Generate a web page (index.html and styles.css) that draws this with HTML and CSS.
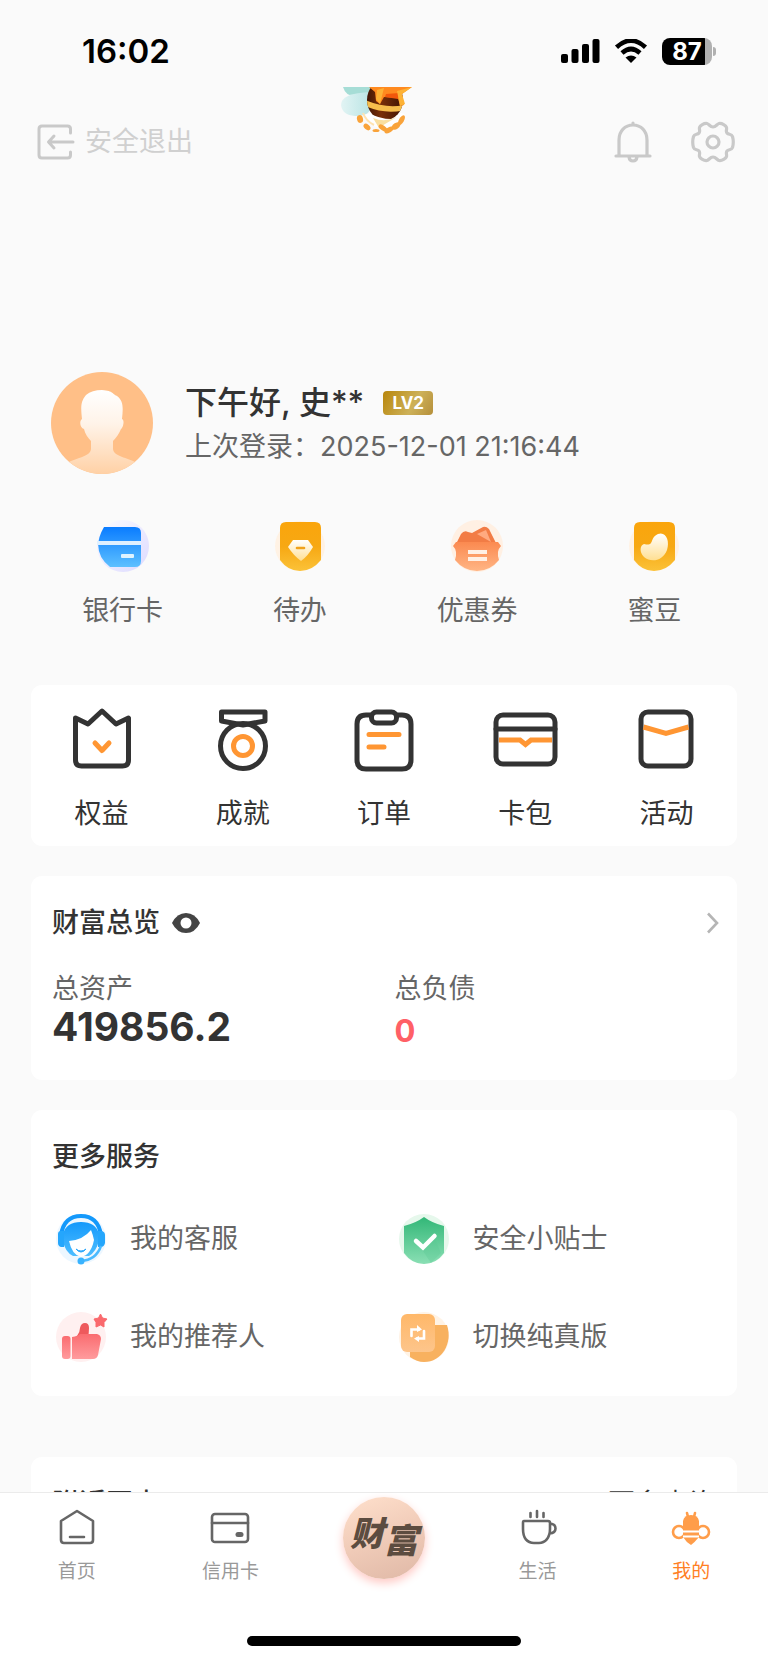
FILE: index.html
```html
<!DOCTYPE html>
<html lang="zh-CN">
  <head>
    <meta charset="UTF-8" />
    <meta name="viewport" content="width=device-width, initial-scale=1.0" />
    <title>我的</title>
    <link rel="stylesheet" href="styles.css">
  </head>
  <body>
    <div class="app">
      <div class="status-bar">
        <span class="time">16:02</span>
        <div class="status-icons">
          <svg width="39" height="26" viewBox="0 0 39 26">
            <rect x="0" y="16" width="7" height="9" rx="2" />
            <rect x="10.5" y="11" width="7" height="14" rx="2" />
            <rect x="21" y="6" width="7" height="19" rx="2" />
            <rect x="31.5" y="1" width="7" height="24" rx="2" />
          </svg>
          <svg width="34" height="24" viewBox="0 0 34 24">
            <path d="M2.5 8.2Q17-5 31.5 8.2M8 14Q17 6 26 14" fill="none" stroke="#000" stroke-width="4.6" />
            <path d="M11.5 18.6Q17 14.4 22.5 18.6L17 24Z" />
          </svg>
          <span class="battery">87</span>
        </div>
      </div>

      <main>
        <header class="top">
          <svg class="bee" width="76" height="48" viewBox="0 0 76 48">
            <defs>
              <linearGradient id="wing" x1="0" x2="1">
                <stop offset="0" stop-color="#e2f4f4" />
                <stop offset="1" stop-color="#b9e4e4" />
              </linearGradient>
              <linearGradient id="stripe" x1="0" x2="1">
                <stop offset="0" stop-color="#3a1204" />
                <stop offset=".4" stop-color="#7a2f08" />
                <stop offset="1" stop-color="#3a1204" />
              </linearGradient>
              <clipPath id="belly"><ellipse cx="46" cy="13" rx="18" ry="20" /></clipPath>
            </defs>
            <path d="M4 0H34L28 7Q8 14 4 0Z" fill="#a6ddd6" />
            <path d="M32 5Q2 6 2 18Q3 28 16 29Q30 29 31 22Z" fill="url(#wing)" />
            <path d="M25 28Q32 43 48 41Q60 38 66 27L46 22Z" fill="#fff" />
            <path d="M24 26Q27 34 35 38" fill="none" stroke="#ffe3b0" stroke-width="2" />
            <path d="M34 31Q46 36 58 30L46 37L40 41Z" fill="#f9dfa0" />
            <g clip-path="url(#belly)">
              <path d="M26-5H66V30Q46 36 26 24Z" fill="url(#stripe)" />
              <path d="M26 13Q46 22 66 18V23Q46 28 26 19Z" fill="#f6bd4c" />
            </g>
            <path d="M30 0H73L63 7L65 18L61 19L59 11L45 10L41 17L37 14L36 5Z" fill="#ff8a1f" />
            <path d="M47 7L60 6L59 12L46 10Z" fill="#f2570b" />
            <path d="M38 3L45 1L41 17L37 12ZM58 4L73 0L63 7L66 17L61 19Z" fill="#fdb235" />
            <g fill="#f9a33a">
              <ellipse cx="21" cy="32" rx="3" ry="4" transform="rotate(-15 21 32)" />
              <ellipse cx="28" cy="40" rx="4" ry="2.5" transform="rotate(40 28 40)" />
              <ellipse cx="37" cy="43.5" rx="3.5" ry="1.6" />
              <ellipse cx="44" cy="41" rx="5" ry="2.5" transform="rotate(35 44 41)" />
              <ellipse cx="50" cy="43" rx="5" ry="2.5" transform="rotate(-30 50 43)" />
              <ellipse cx="57" cy="39" rx="5" ry="3" transform="rotate(-35 57 39)" />
              <ellipse cx="62.5" cy="33" rx="2.5" ry="5.5" transform="rotate(30 62 33)" />
            </g>
          </svg>
          <button class="logout" type="button">
            <svg width="38" height="36" viewBox="0 0 38 36" fill="none" stroke="#c9c9c9" stroke-width="3" stroke-linecap="round" stroke-linejoin="round">
              <path d="M33.500 9V5Q33.500 2 30.500 2H5Q2 2 2 5V31Q2 34 5 34H30.500Q33.500 34 33.500 31V28" />
              <path d="M36 18H12M17 12L11.500 18L17 24" />
            </svg>
            安全退出
          </button>
          <div class="top-actions">
            <button type="button" aria-label="消息">
              <svg width="38" height="42" viewBox="0 0 38 42" fill="none" stroke="#c9c9c9" stroke-width="3.2" stroke-linecap="round">
                <path d="M2 35H36M5 35V19C5 10 11 4 19 4S33 10 33 19V35M19 2V4M15 36Q15.500 40 19 40T23 36" />
              </svg>
            </button>
            <button type="button" aria-label="设置">
              <svg width="44" height="42" viewBox="-22 -21 44 42" fill="none" stroke="#c9c9c9" stroke-width="3.2" stroke-linejoin="round">
                <path d="M0-15C3-15 4-18 6-18.500C9-19 13-16.500 13.500-14.500C14-12 12.500-11 14-9C15.500-7 18.500-8.500 19.500-5.500C20.500-2 20.500 2 19.500 5.500C18.500 8.500 15.500 7 14 9C12.500 11 14 12 13.500 14.500C13 16.500 9 19 6 18.500C4 18 3 15 0 15C-3 15-4 18-6 18.500C-9 19-13 16.500-13.500 14.500C-14 12-12.500 11-14 9C-15.500 7-18.500 8.500-19.500 5.500C-20.500 2-20.500-2-19.500-5.500C-18.500-8.500-15.500-7-14-9C-12.500-11-14-12-13.500-14.500C-13-16.500-9-19-6-18.500C-4-18-3-15 0-15Z" />
                <circle r="6" />
              </svg>
            </button>
          </div>
        </header>

        <section class="profile">
          <svg width="102" height="102" viewBox="0 0 102 102">
            <defs>
              <linearGradient id="person" x1="0" y1="0" x2="0" y2="1">
                <stop offset="0" stop-color="#fff" />
                <stop offset=".4" stop-color="#fff3e8" />
                <stop offset="1" stop-color="#ffd0a4" />
              </linearGradient>
              <clipPath id="round"><circle cx="51" cy="51" r="51" /></clipPath>
            </defs>
            <circle cx="51" cy="51" r="51" fill="#ffbf87" />
            <path clip-path="url(#round)" d="M51 18C63 19 61 22 66 24C73 29 72 37 71 47C74 48 72 56 70 57C68 62 65 66 62 69V77C63 85 76 85 86 91V103H16V91C27 85 39 85 40 77V69C37 66 34 62 33 57C29 56 28 49 31 47C30 37 29 30 35 23Q41 18 51 18Z" fill="url(#person)" />
          </svg>
          <div class="profile-info">
            <div class="greeting">下午好, 史**<span class="level">LV2</span></div>
            <div class="last-login">上次登录：2025-12-01 21:16:44</div>
          </div>
        </section>

        <nav class="quick">
          <a href="#">
            <svg width="54" height="54" viewBox="0 0 54 54">
              <defs>
                <linearGradient id="blue" x1="0" y1="0" x2="0" y2="1">
                  <stop offset="0" stop-color="#0a7cff" />
                  <stop offset="1" stop-color="#5dc0ff" />
                </linearGradient>
                <linearGradient id="lilac" x1="0" y1="0" x2="1" y2="1">
                  <stop offset="0" stop-color="#fdfcff" />
                  <stop offset="1" stop-color="#dcdaff" />
                </linearGradient>
              </defs>
              <circle cx="27" cy="27" r="26" fill="url(#lilac)" />
              <path d="M8 8H39Q45 8 45 14V42Q45 48 39 48H14Q-6 32 8 8Z" fill="url(#blue)" />
              <path d="M1 22H45V26H1Z" fill="#dff0ff" />
              <rect x="25" y="35" width="13" height="4" rx="1" fill="#dff3ff" />
            </svg>
            银行卡
          </a>
          <a href="#">
            <svg width="54" height="54" viewBox="0 0 54 54">
              <defs>
                <linearGradient id="gold" x1="0" y1="0" x2="0" y2="1">
                  <stop offset="0" stop-color="#faa50c" />
                  <stop offset=".5" stop-color="#f7a813" />
                  <stop offset="1" stop-color="#fbc238" />
                </linearGradient>
                <linearGradient id="cream" x1="0" y1="0" x2="0" y2="1">
                  <stop offset="0" stop-color="#fff" />
                  <stop offset="1" stop-color="#ffdf92" />
                </linearGradient>
              </defs>
              <circle cx="27" cy="27" r="25" fill="#fff2e4" />
              <path d="M7 9Q7 3 13 3H42Q48 3 48 9V41Q39 52 27 52T7 41Z" fill="url(#gold)" />
              <path d="M20 21H35L40 28Q35 37 28 42Q21 37 15 28Z" fill="url(#cream)" />
              <path d="M24 29H31" stroke="#f0a21c" stroke-width="2.6" stroke-linecap="round" />
            </svg>
            待办
          </a>
          <a href="#">
            <svg width="54" height="54" viewBox="0 0 54 54">
              <defs>
                <linearGradient id="coral" x1="0" y1="0" x2="0" y2="1">
                  <stop offset="0" stop-color="#fb8a50" />
                  <stop offset="1" stop-color="#ffb585" />
                </linearGradient>
              </defs>
              <circle cx="27" cy="27" r="26" fill="#fff0e3" />
              <path d="M6 25L11 15Q14 11 18 13L22 14L33 8Q36 7 39 10L46 24V30H6Z" fill="#f27c45" />
              <path d="M27 15L36 11L41 23Z" fill="#ffaa80" />
              <path d="M6 23H48L51 27Q46 32 49 41Q40 52 27 52T5 41Q8 32 3 27Z" fill="url(#coral)" />
              <path d="M18 33H37M18 40H37" stroke="#fff0e5" stroke-width="4" />
            </svg>
            优惠券
          </a>
          <a href="#">
            <svg width="54" height="54" viewBox="0 0 54 54">
              <circle cx="27" cy="27" r="25" fill="#fff2e4" />
              <path d="M7 9Q7 3 13 3H42Q48 3 48 9V41Q39 52 27 52T7 41Z" fill="url(#gold)" />
              <path d="M31 15C39 12 43 22 40 31C36 42 24 44 17 38C12 33 13 26 17 25C28 28 22 19 31 15Z" fill="url(#cream)" />
            </svg>
            蜜豆
          </a>
        </nav>

        <nav class="card shortcuts">
          <a href="#">
            <svg class="line-icon" width="66" height="66" viewBox="0 0 66 66">
              <path d="M6.500 12L19 18L33 5L47 18L59.500 12V54Q59.500 60 53.500 60H12.500Q6.500 60 6.500 54Z" />
              <path class="accent" d="M26 37L33 44.500L40 37" />
            </svg>
            权益
          </a>
          <a href="#">
            <svg class="line-icon" width="66" height="66" viewBox="0 0 66 66">
              <path d="M11.500 6H55V15L33 19L11.500 15Z" />
              <circle cx="33" cy="40" r="22.500" />
              <circle class="accent" cx="33" cy="40" r="9.500" />
            </svg>
            成就
          </a>
          <a href="#">
            <svg class="line-icon" width="66" height="66" viewBox="0 0 66 66">
              <path d="M20 9H15Q6 9 6 18V54Q6 63 15 63H51Q60 63 60 54V18Q60 9 51 9H46" />
              <rect x="20.500" y="6" width="25" height="11" rx="5" />
              <path class="accent" d="M18 28.500H48M18 41H33" />
            </svg>
            订单
          </a>
          <a href="#">
            <svg class="line-icon" width="66" height="66" viewBox="0 0 66 66">
              <rect x="4" y="9" width="59" height="49" rx="7" />
              <path d="M4 23H63" />
              <path class="accent flat" d="M7 34H28L33.500 38.500L39 34H60" />
            </svg>
            卡包
          </a>
          <a href="#">
            <svg class="line-icon" width="66" height="66" viewBox="0 0 66 66">
              <rect x="8" y="6" width="50" height="54" rx="7" />
              <path class="accent flat" d="M10.500 21L33 27.500L55.500 21" />
            </svg>
            活动
          </a>
        </nav>

        <section class="card wealth">
          <div class="card-head">
            <h2>财富总览</h2>
            <button type="button" aria-label="显示金额">
              <svg width="28" height="20" viewBox="0 0 28 20">
                <path d="M0 10Q5 0 14 0T28 10Q23 20 14 20T0 10Z" fill="#444" />
                <circle cx="14" cy="10" r="5.500" fill="#fff" />
              </svg>
            </button>
            <a class="more" href="#" aria-label="查看详情">
              <svg width="14" height="22" viewBox="0 0 14 22" fill="none" stroke="#b5b5b5" stroke-width="2.6">
                <path d="M2 1.500L11 11L2 20.500" />
              </svg>
            </a>
          </div>
          <div class="columns">
            <div>
              <div class="label">总资产</div>
              <div class="amount">419856.2</div>
            </div>
            <div>
              <div class="label">总负债</div>
              <div class="amount debt">0</div>
            </div>
          </div>
        </section>

        <section class="card services">
          <h2>更多服务</h2>
          <div class="columns">
            <a href="#">
              <svg width="58" height="58" viewBox="0 0 58 58">
                <defs>
                  <linearGradient id="sky" x1="0" y1="0" x2="0" y2="1">
                    <stop offset="0" stop-color="#1499fb" />
                    <stop offset="1" stop-color="#4dbdff" />
                  </linearGradient>
                </defs>
                <circle cx="29" cy="29" r="25" fill="#edf7ff" />
                <path d="M9 25Q12 6 29 6T49 25" fill="none" stroke="#1499fb" stroke-width="4" />
                <path d="M11 24Q14 12 29 12T47 24V31Q44 42 37 46H21Q13 42 11 31Z" fill="url(#sky)" />
                <path d="M17 31Q31 30 39 20Q41 25 42 30Q39 45 29 47Q20 45 17 31Z" fill="#fff" />
                <path d="M24 39Q29 43 34 39Q32 42 29 42T24 39Z" fill="#2aa6fb" stroke="#2aa6fb" />
                <path d="M6 24Q6 21 9 21H12V37H9Q6 36 6 33ZM46 21H50Q53 22 53 25V33Q52 37 49 37H46Z" fill="#25a6fc" />
                <path d="M49 36Q44 50 29 51" fill="none" stroke="#4abaff" stroke-width="2.5" />
                <circle cx="29" cy="51" r="3.500" fill="#38b3ff" />
              </svg>
              我的客服
            </a>
            <a href="#">
              <svg width="58" height="58" viewBox="0 0 58 58">
                <defs>
                  <linearGradient id="green" x1="0" y1="0" x2="0" y2="1">
                    <stop offset="0" stop-color="#32b777" />
                    <stop offset="1" stop-color="#8adfb4" />
                  </linearGradient>
                </defs>
                <circle cx="29" cy="29" r="25" fill="#e6f8ec" />
                <path d="M29 7Q37 13 49 16V43Q41 54 29 54T9 43V16Q21 13 29 7Z" fill="url(#green)" />
                <path d="M28 41L40 29L46 43L36 53Z" fill="#59c792" opacity=".3" />
                <path d="M21 31L28 37.500L39.500 26" fill="none" stroke="#fff" stroke-width="4.5" stroke-linecap="round" />
              </svg>
              安全小贴士
            </a>
            <a href="#">
              <svg width="58" height="58" viewBox="0 0 58 58">
                <defs>
                  <linearGradient id="pink" x1="0" y1="0" x2="0" y2="1">
                    <stop offset="0" stop-color="#fa6c70" />
                    <stop offset="1" stop-color="#ff9b9d" />
                  </linearGradient>
                </defs>
                <circle cx="29" cy="29" r="25" fill="#fff0f0" />
                <path d="M25 28Q28 24 28 20Q29 15 33 15T37 20Q37 24 36 30Z" fill="#ee595c" />
                <path d="M20 51V29Q26 28 28 26H45Q49 27 49 31L46 47Q45 51 41 51Z" fill="url(#pink)" />
                <rect x="10" y="28" width="8.500" height="23" rx="3" fill="url(#pink)" />
                <path d="M48.500 6L50.500 10L55 11L52 14.500V19L48.500 17L44 19V14.500L42 11L46.500 10Z" fill="#fa696d" stroke="#fa696d" stroke-linejoin="round" />
              </svg>
              我的推荐人
            </a>
            <a href="#">
              <svg width="58" height="58" viewBox="0 0 58 58">
                <defs>
                  <linearGradient id="peach" x1="0" y1="0" x2="0" y2="1">
                    <stop offset="0" stop-color="#ffb869" />
                    <stop offset="1" stop-color="#fdc58b" />
                  </linearGradient>
                </defs>
                <circle cx="29" cy="29" r="25" fill="#fff3e5" />
                <path d="M15 17H52C58 35 47 54 29 54Q22 54 15 49Z" fill="#f8b15f" />
                <rect x="6" y="6" width="34" height="38" rx="6" fill="url(#peach)" />
                <path d="M16.500 28V21.500H24M29 23V30.500H22" fill="none" stroke="#fff" stroke-width="2.6" stroke-linecap="round" />
                <path d="M22 17L27 21.500L22 24ZM24 28L19 30.500L24 34Z" fill="#fff" />
              </svg>
              切换纯真版
            </a>
          </div>
        </section>

        <section class="card branches">
          <h2>附近网点</h2>
          <a href="#">更多查询</a>
        </section>
      </main>

      <nav class="tab-bar">
        <a href="#">
          <svg width="40" height="40" viewBox="0 0 40 40">
            <path d="M4 14L20 4L36 14V33Q36 36 33 36H7Q4 36 4 33ZM13 30H27" />
          </svg>
          首页
        </a>
        <a href="#">
          <svg width="40" height="40" viewBox="0 0 40 40">
            <rect x="2" y="7" width="36" height="28" rx="3" />
            <path d="M2 16H38" />
            <path d="M28 27.500H31" stroke-width="5" />
          </svg>
          信用卡
        </a>
        <a href="#" class="fortune">
          <span class="coin"><span>财</span><span class="low">富</span></span>
        </a>
        <a href="#">
          <svg width="40" height="40" viewBox="0 0 40 40">
            <path d="M6 14H30Q32 14 32 16V22C32 31 27 36 21 36H16C9 36 5 31 5 22V16Q5 14 6 14ZM32 16.500Q37.500 17 37.500 21.500T31.500 26.500M12.500 6V10M19 4V10M25.500 6V10" />
          </svg>
          生活
        </a>
        <a href="#" class="active">
          <svg width="40" height="40" viewBox="0 0 40 40">
            <circle cx="8" cy="25" r="6" />
            <circle cx="32" cy="25" r="6" />
            <path d="M16 6L17 10M24 6L23 10" />
            <path d="M12 30V14Q13 8 20 8T28 14V30Q24 35 20 38Q15 35 12 30Z" fill="#ff9d4a" stroke="none" />
            <path d="M12 24.500H28M12 29.500H28" stroke="#fff" stroke-width="1.800" stroke-linecap="butt" />
          </svg>
          我的
        </a>
        <div class="home-indicator"></div>
      </nav>
    </div>
  </body>
</html>
```
FILE: styles.css
```css
* {
  box-sizing: border-box;
}
body {
  margin: 0;
  background-color: #fafafa;
  color: #333;
  font-family: Inter, "Noto Sans CJK SC", sans-serif;
  font-size: 27px;
  line-height: 40px;
}
a {
  color: inherit;
  text-decoration: none;
}
button {
  display: flex;
  align-items: center;
  padding: 0;
  border: none;
  background: none;
  color: inherit;
  font: inherit;
  cursor: pointer;
}
svg {
  display: block;
  flex-shrink: 0;
}
h2 {
  margin: 0;
  font-size: 27px;
  font-weight: 500;
}
.app {
  display: flex;
  flex-direction: column;
  height: 100vh;
}

/* status bar */
.status-bar {
  display: flex;
  flex-shrink: 0;
  justify-content: space-between;
  align-items: center;
  height: 87px;
  padding: 15px 56px 0 82px;
  color: #000;
}
.time {
  font-size: 33px;
  font-weight: 600;
}
.status-icons {
  display: flex;
  align-items: center;
  gap: 14px;
}
.battery {
  position: relative;
  width: 50px;
  height: 27px;
  border-radius: 8px;
  background: linear-gradient(to right, #000 86%, #b0b0b0 86%);
  color: #fff;
  font-size: 24px;
  font-weight: 700;
  line-height: 27px;
  text-align: center;
}
.battery::after {
  content: "";
  position: absolute;
  top: 9px;
  right: -4px;
  width: 3px;
  height: 9px;
  border-radius: 0 3px 3px 0;
  background-color: #b0b0b0;
}

main {
  flex: 1;
  min-height: 0;
  overflow-y: auto;
  scrollbar-width: none;
}
.top {
  position: relative;
  display: flex;
  justify-content: space-between;
  align-items: center;
  height: 110px;
  padding: 0 33px 0 37px;
}
.bee {
  position: absolute;
  top: 0;
  left: 50%;
  margin-left: -45px;
}
.logout {
  gap: 10px;
  color: #d0d0d0;
}
.top-actions {
  display: flex;
  align-items: center;
  gap: 39px;
}

.profile {
  display: flex;
  gap: 32px;
  margin-top: 175px;
  padding: 0 51px;
}
.profile-info {
  padding-top: 9px;
  line-height: 44px;
}
.greeting {
  display: flex;
  align-items: center;
  font-size: 32px;
  font-weight: 500;
}
.level {
  width: 50px;
  margin-left: 19px;
  border-radius: 4px;
  background: linear-gradient(120deg, #b8860b, #cdb159 60%, #b58f3a);
  color: #fff;
  font-size: 17px;
  font-weight: 700;
  line-height: 24px;
  text-align: center;
}
.last-login {
  color: #666;
}

.quick {
  display: grid;
  grid-template-columns: repeat(4, 1fr);
  margin: 45px 25px 0 34px;
  color: #666;
}
.quick a {
  display: flex;
  flex-direction: column;
  align-items: center;
  gap: 18px;
}

.card {
  margin: 30px 31px 0;
  border-radius: 11px;
  background-color: #fff;
}
.shortcuts {
  display: grid;
  grid-template-columns: repeat(5, 1fr);
  margin-top: 54px;
  padding: 21px 0 12px;
}
.shortcuts a {
  display: flex;
  flex-direction: column;
  align-items: center;
  gap: 22px;
}
.line-icon {
  fill: none;
  stroke: #333;
  stroke-width: 5;
  stroke-linecap: round;
  stroke-linejoin: round;
}
.accent {
  stroke: #ff9633;
}
.flat {
  stroke-linecap: butt;
  stroke-linejoin: miter;
}

.wealth {
  padding: 27px 0 33px 21px;
}
.card-head {
  display: flex;
  align-items: center;
  gap: 12px;
}
.more {
  margin-left: auto;
  padding-right: 17px;
}
.columns {
  display: grid;
  grid-template-columns: 1fr 1fr;
}
.wealth .columns {
  margin-top: 28px;
}
.label {
  color: #666;
  line-height: 36px;
}
.amount {
  font-size: 39px;
  font-weight: 700;
}
.debt {
  color: #ff6066;
  font-size: 31px;
  line-height: 48px;
}
.wealth .columns > div {
  height: 76px;
}

.services {
  padding: 27px 0 30px 21px;
}
.services .columns {
  row-gap: 40px;
  margin-top: 33px;
  color: #666;
}
.services a {
  display: flex;
  align-items: center;
  gap: 20px;
}
.branches {
  display: flex;
  justify-content: space-between;
  margin-top: 61px;
  padding: 27px 21px;
}

/* bottom tabs */
.tab-bar {
  position: relative;
  display: grid;
  flex-shrink: 0;
  grid-template-columns: repeat(5, 1fr);
  align-items: start;
  height: 171px;
  border-top: 1px solid #ebebeb;
  background-color: #fff;
  color: #999;
  font-size: 19px;
  line-height: 28px;
}
.tab-bar a {
  display: flex;
  flex-direction: column;
  align-items: center;
  gap: 11px;
  padding-top: 14px;
}
.tab-bar svg {
  fill: none;
  stroke: #666;
  stroke-width: 2.6;
  stroke-linecap: round;
  stroke-linejoin: round;
}
.tab-bar .active {
  color: #ff7f24;
}
.tab-bar .active svg {
  stroke: #ff9d4a;
}
.tab-bar .fortune {
  padding-top: 4px;
}
.coin {
  display: flex;
  justify-content: center;
  width: 82px;
  height: 82px;
  padding-top: 17px;
  border-radius: 50%;
  background: linear-gradient(160deg, #ffe0cc, #f0cbb8 50%, #dfb8a6);
  box-shadow: 0 4px 10px #ffc9c4;
  color: #5c4c40;
  font-size: 34px;
  font-style: italic;
  font-weight: 900;
  line-height: 40px;
}
.low {
  padding-top: 7px;
}
.home-indicator {
  position: absolute;
  bottom: 17px;
  left: 50%;
  width: 274px;
  height: 10px;
  margin-left: -137px;
  border-radius: 5px;
  background-color: #000;
}
```
